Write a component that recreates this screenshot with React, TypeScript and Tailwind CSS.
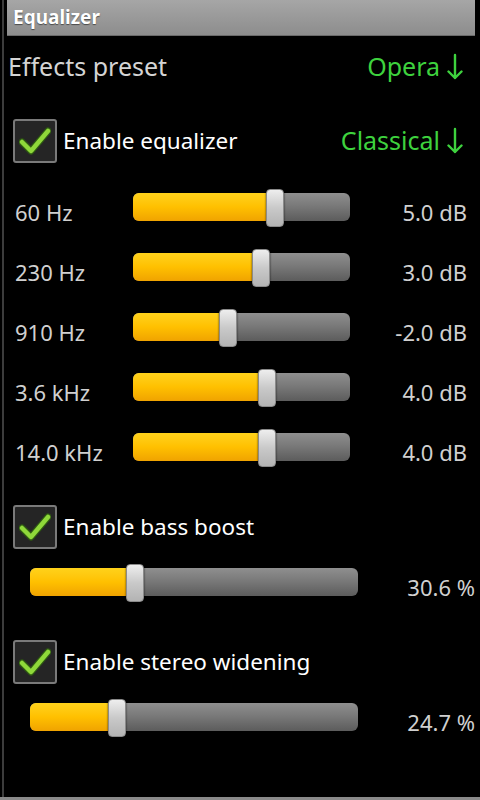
import React from 'react';

const font = { fontFamily: '"Noto Sans", "Open Sans", "DejaVu Sans", sans-serif' };

interface SliderProps {
  width: number;
  value: number; // thumb centre, px from track start
}

// Yellow/grey Android-style seek bar
function SeekBar({ width, value }: SliderProps) {
  return (
    <div className="relative h-[28px] shrink-0" style={{ width }}>
      <div className="absolute inset-0 rounded-[6px] bg-gradient-to-b from-[#8f8f8f] via-[#777777] to-[#5c5c5c]" />
      <div
        className="absolute left-0 top-0 h-[28px] rounded-l-[6px] bg-gradient-to-b from-[#ffd21a] via-[#ffc000] to-[#f0a300]"
        style={{ width: value }}
      />
      <div
        className="absolute top-[-4px] h-[38px] w-[18px] rounded-[4px] border border-[#8a8a8a] bg-gradient-to-b from-[#eeeeee] via-[#c9c9c9] to-[#b3b3b3] shadow-[0_0_2px_rgba(0,0,0,0.8)]"
        style={{ left: value - 9 }}
      />
    </div>
  );
}

function CheckBox() {
  return (
    <div className="w-[44px] h-[44px] shrink-0 rounded-[3px] border-2 border-[#7a7a7a] bg-[#252525] flex items-center justify-center">
      <svg width="32" height="28" viewBox="0 0 32 28">
        <path d="M3 15 L12 24 L29 4" fill="none" stroke="#2e5a12" strokeWidth="7" strokeLinecap="round" strokeLinejoin="round" />
        <path d="M3 15 L12 24 L29 4" fill="none" stroke="#8fd83a" strokeWidth="4.5" strokeLinecap="round" strokeLinejoin="round" />
      </svg>
    </div>
  );
}

function DownArrow() {
  return (
    <svg width="16" height="28" viewBox="0 0 16 28" className="shrink-0">
      <path d="M8 2 V25 M1.5 18.5 L8 25 L14.5 18.5" fill="none" stroke="#3ed23e" strokeWidth="2.4" strokeLinecap="round" strokeLinejoin="round" />
    </svg>
  );
}

const bands = [
  { label: '60 Hz', value: 142, db: '5.0 dB' },
  { label: '230 Hz', value: 128, db: '3.0 dB' },
  { label: '910 Hz', value: 95, db: '-2.0 dB' },
  { label: '3.6 kHz', value: 134, db: '4.0 dB' },
  { label: '14.0 kHz', value: 134, db: '4.0 dB' },
];

export default function App() {
  return (
    <div className="w-[480px] h-[800px] bg-black relative overflow-hidden" style={font}>
      <div className="absolute left-[2px] top-0 bottom-0 w-[2px] bg-[#3c3c3c]" />
      <div className="absolute left-0 right-0 bottom-0 h-[3px] bg-[#8a8a8a]" />

      {/* Title bar */}
      <div className="ml-[7px] mr-[5px] h-[36px] bg-gradient-to-b from-[#a6a6a6] to-[#8d8d8d] flex items-center px-[6px] border-b border-[#6a6a6a]">
        <span className="text-white font-bold text-[19px] leading-none [text-shadow:0_1px_1px_rgba(0,0,0,0.5)]">Equalizer</span>
      </div>

      {/* Effects preset */}
      <div className="h-[62px] flex items-center justify-between pl-[8px] pr-[17px]">
        <span className="text-[#d4d4d4] text-[25px]">Effects preset</span>
        <span className="text-[#3ed23e] text-[25px] flex items-center gap-[7px]">
          Opera<DownArrow />
        </span>
      </div>

      {/* Enable equalizer */}
      <div className="h-[79px] pt-[7px] flex items-center justify-between pl-[13px] pr-[17px]">
        <div className="flex items-center gap-[6px]">
          <CheckBox />
          <span className="text-white text-[22.5px]">Enable equalizer</span>
        </div>
        <span className="text-[#3ed23e] text-[25px] flex items-center gap-[7px]">
          Classical<DownArrow />
        </span>
      </div>

      {/* Bands */}
      {bands.map(b => (
        <div key={b.label} className="h-[60px] flex items-center pl-[15px] pr-[13px]">
          <span className="w-[118px] text-[#d0d0d0] text-[22px] leading-none mt-[10px]">{b.label}</span>
          <SeekBar width={217} value={b.value} />
          <span className="flex-1 text-right text-[#d0d0d0] text-[22px] leading-none mt-[10px]">{b.db}</span>
        </div>
      ))}

      {/* Bass boost */}
      <div className="mt-[28px] flex items-center gap-[6px] pl-[13px]">
        <CheckBox />
        <span className="text-white text-[22.5px]">Enable bass boost</span>
      </div>
      <div className="mt-[19px] h-[28px] flex items-center pl-[30px] pr-[5px]">
        <SeekBar width={328} value={105} />
        <span className="flex-1 text-right text-[#d0d0d0] text-[22px] leading-none mt-[10px]">30.6 %</span>
      </div>

      {/* Stereo widening */}
      <div className="mt-[44px] flex items-center gap-[6px] pl-[13px]">
        <CheckBox />
        <span className="text-white text-[22.5px]">Enable stereo widening</span>
      </div>
      <div className="mt-[19px] h-[28px] flex items-center pl-[30px] pr-[5px]">
        <SeekBar width={328} value={87} />
        <span className="flex-1 text-right text-[#d0d0d0] text-[22px] leading-none mt-[10px]">24.7 %</span>
      </div>
    </div>
  );
}
